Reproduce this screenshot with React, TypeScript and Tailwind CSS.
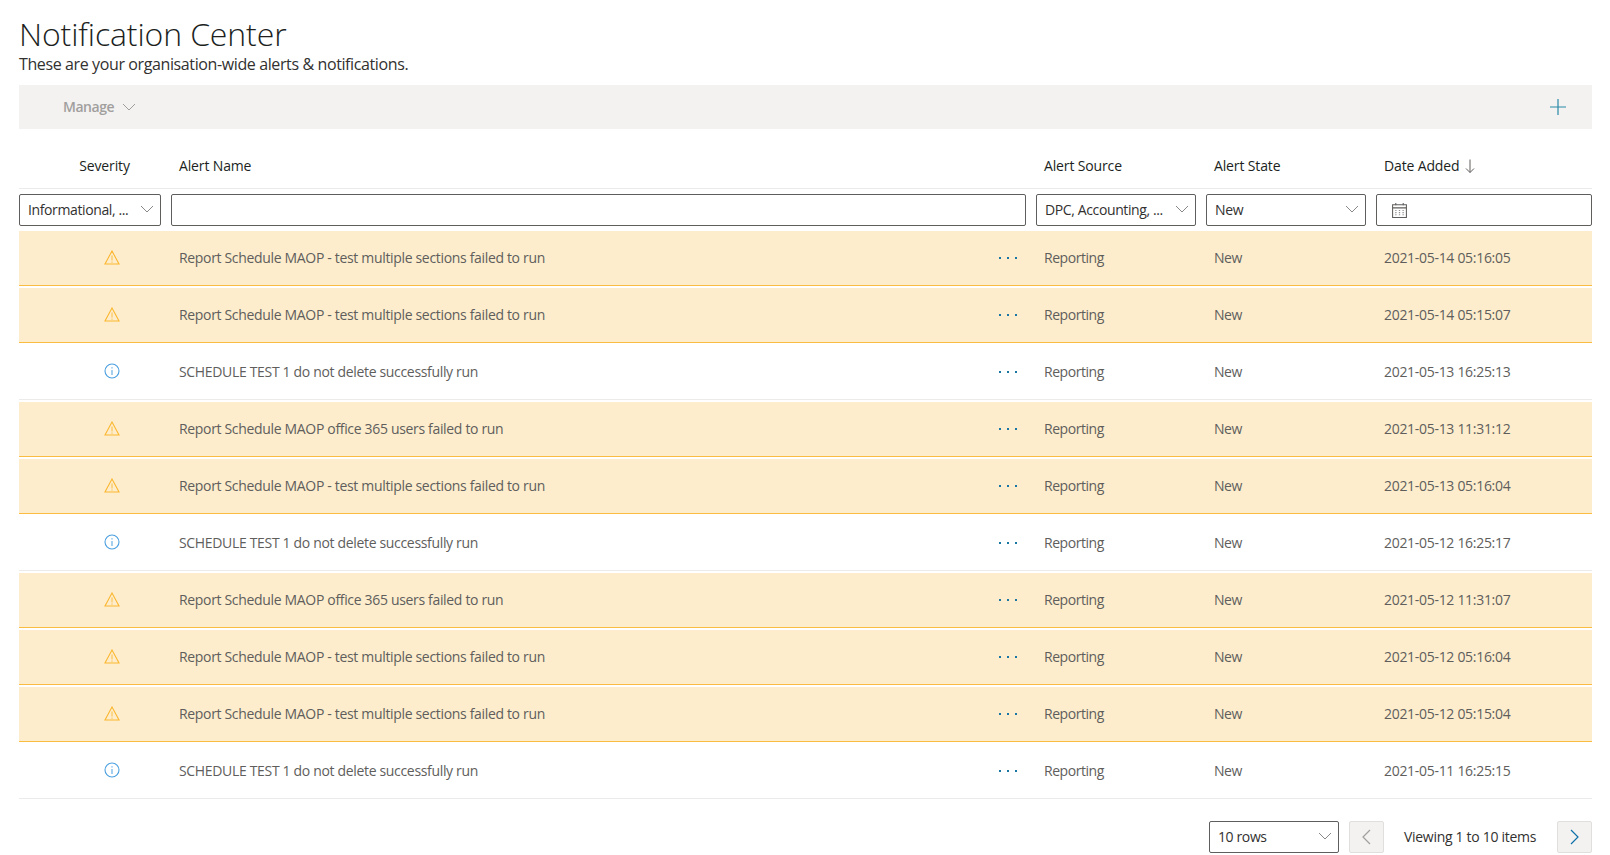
const font = "font-['Open_Sans','Noto_Sans',sans-serif]";
const columns = "grid grid-cols-[152px_865px_170px_170px_1fr]";

type Alert = {
  severity: "warning" | "info";
  name: string;
  date: string;
};

const alerts: Alert[] = [
  { severity: "warning", name: "Report Schedule MAOP - test multiple sections failed to run", date: "2021-05-14 05:16:05" },
  { severity: "warning", name: "Report Schedule MAOP - test multiple sections failed to run", date: "2021-05-14 05:15:07" },
  { severity: "info", name: "SCHEDULE TEST 1 do not delete successfully run", date: "2021-05-13 16:25:13" },
  { severity: "warning", name: "Report Schedule MAOP office 365 users failed to run", date: "2021-05-13 11:31:12" },
  { severity: "warning", name: "Report Schedule MAOP - test multiple sections failed to run", date: "2021-05-13 05:16:04" },
  { severity: "info", name: "SCHEDULE TEST 1 do not delete successfully run", date: "2021-05-12 16:25:17" },
  { severity: "warning", name: "Report Schedule MAOP office 365 users failed to run", date: "2021-05-12 11:31:07" },
  { severity: "warning", name: "Report Schedule MAOP - test multiple sections failed to run", date: "2021-05-12 05:16:04" },
  { severity: "warning", name: "Report Schedule MAOP - test multiple sections failed to run", date: "2021-05-12 05:15:04" },
  { severity: "info", name: "SCHEDULE TEST 1 do not delete successfully run", date: "2021-05-11 16:25:15" },
];

function Chevron({ className }: { className: string }) {
  return (
    <svg viewBox="0 0 14 8" fill="none" className={className}>
      <path d="M1 1l6 6 6-6" stroke="currentColor" strokeWidth="1" />
    </svg>
  );
}

function WarningIcon() {
  return (
    <svg viewBox="0 0 16 15" fill="none" className="w-4 h-[15px] text-[#fbb72f]">
      <path d="M8 1L1 14h14L8 1z" stroke="currentColor" strokeWidth="1.1" />
      <path d="M8 5.5v5M8 11.5v1.2" stroke="currentColor" strokeWidth="0.9" />
    </svg>
  );
}

function InfoIcon() {
  return (
    <svg viewBox="0 0 16 16" fill="none" className="w-4 h-4 text-[#4b9fdf]">
      <circle cx="8" cy="8" r="7" stroke="currentColor" strokeWidth="1.1" />
      <path d="M8 7v5M8 4.2v1.3" stroke="currentColor" strokeWidth="1" />
    </svg>
  );
}

function CalendarIcon() {
  return (
    <svg viewBox="0 0 16 16" fill="none" className="w-[17px] h-[17px] text-[#605e5c]">
      <path d="M1.5 2.5h13v12h-13z" stroke="currentColor" strokeWidth="1" />
      <path d="M1.5 5.5h13M4.5 1v2M11.5 1v2" stroke="currentColor" strokeWidth="1" />
      <path d="M4 8h1.2M7.4 8h1.2M10.8 8h1.2M4 10h1.2M7.4 10h1.2M10.8 10h1.2M4 12h1.2M7.4 12h1.2M10.8 12h1.2" stroke="currentColor" strokeWidth="1" opacity="0.7" />
    </svg>
  );
}

function Dropdown({ label, className }: { label: string; className: string }) {
  return (
    <div className={`h-8 border border-[#605e5c] rounded-[2px] bg-white flex items-center justify-between pl-2 pr-[6px] pb-[2px] text-[14px] tracking-[-0.38px] text-[#323130] ${className}`}>
      <span className="whitespace-nowrap">{label}</span>
      <Chevron className="w-[14px] h-2 text-[#8a8886]" />
    </div>
  );
}

export default function App() {
  return (
    <div className={`w-[1610px] h-[855px] overflow-hidden bg-white pl-[19px] pr-[18px] ${font}`}>
      <h1 className="pt-[13px] h-[53px] text-[32px] leading-[42px] font-light tracking-[-0.12px] text-[#201f1e]">
        Notification Center
      </h1>
      <p className="h-[19px] text-[16px] leading-[22px] tracking-[-0.385px] text-[#323130]">
        These are your organisation-wide alerts &amp; notifications.
      </p>

      <div className="mt-[13px] h-11 bg-[#f3f2f1] flex items-center justify-between pl-11 pr-[26px]">
        <div className="flex items-center gap-2 text-[14px] leading-[18px] pb-px font-semibold tracking-[-0.45px] text-[#a19f9d]">
          Manage
          <Chevron className="w-[14px] h-2 text-[#a19f9d]" />
        </div>
        <svg viewBox="0 0 16 16" fill="none" className="w-4 h-4 text-[#2b88a8]">
          <path d="M8 0v16M0 8h16" stroke="currentColor" strokeWidth="1.2" />
        </svg>
      </div>

      <div className={`${columns} mt-[26px] h-[34px] border-b border-[#edebe9] text-[14px] font-medium tracking-[-0.14px] text-[#201f1e]`}>
        <div className="flex justify-center pl-[19px]">Severity</div>
        <div className="pl-2">Alert Name</div>
        <div className="pl-2">Alert Source</div>
        <div className="pl-2">Alert State</div>
        <div className="pl-2 flex items-start gap-[6px]">
          Date Added
          <svg viewBox="0 0 10 14" fill="none" className="w-[10px] h-[15px] mt-1 text-[#605e5c]">
            <path d="M5 0v13M1 9l4 4 4-4" stroke="currentColor" strokeWidth="1" />
          </svg>
        </div>
      </div>

      <div className={`${columns} mt-[5px]`}>
        <Dropdown label="Informational, ..." className="mr-[10px]" />
        <div className="h-8 border border-[#605e5c] rounded-[2px] mr-[10px]" />
        <Dropdown label="DPC, Accounting, ..." className="mr-[10px]" />
        <Dropdown label="New" className="mr-[10px]" />
        <div className="h-8 border border-[#605e5c] rounded-[2px] flex items-center pl-[14px]">
          <CalendarIcon />
        </div>
      </div>

      <div className="mt-[5px]">
        {alerts.map((alert) => (
          <div
            key={alert.date}
            className={`${columns} h-[55px] mb-[2px] pb-[2px] items-center border-b text-[14px] tracking-[-0.45px] text-[#605e5c] ${
              alert.severity === "warning"
                ? "bg-[#fdedcd] border-[#fbbd41]"
                : "bg-white border-[#edebe9]"
            }`}
          >
            <div className="flex justify-center pl-[34px]">
              {alert.severity === "warning" ? <WarningIcon /> : <InfoIcon />}
            </div>
            <div className="pl-2 flex items-center justify-between pr-[19px]">
              <span className="tracking-[-0.33px]">{alert.name}</span>
              <svg viewBox="0 0 18 3" className="w-[18px] h-[3px] mt-[3px] text-[#1a76a3]">
                <rect x="0" width="2" height="2" fill="currentColor" />
                <rect x="8" width="2" height="2" fill="currentColor" />
                <rect x="16" width="2" height="2" fill="currentColor" />
              </svg>
            </div>
            <div className="pl-2">Reporting</div>
            <div className="pl-2">New</div>
            <div className="pl-2 tracking-[-0.3px]">{alert.date}</div>
          </div>
        ))}
      </div>

      <div className="mt-[22px] flex items-center justify-end gap-[10px]">
        <Dropdown label="10 rows" className="w-[130px]" />
        <button className="w-[35px] h-8 border border-[#e1dfdd] rounded-[2px] bg-[#f3f2f1] flex items-center justify-center text-[#a19f9d]">
          <svg viewBox="0 0 9 16" fill="none" className="w-[9px] h-4">
            <path d="M8 1L1 8l7 7" stroke="currentColor" strokeWidth="1.2" />
          </svg>
        </button>
        <span className="w-[153px] pl-[10px] pb-[2px] text-[14px] tracking-[-0.3px] text-[#323130]">Viewing 1 to 10 items</span>
        <button className="w-[35px] h-8 border border-[#e1dfdd] rounded-[2px] bg-[#f3f2f1] flex items-center justify-center text-[#0f6fa8]">
          <svg viewBox="0 0 9 16" fill="none" className="w-[9px] h-4">
            <path d="M1 1l7 7-7 7" stroke="currentColor" strokeWidth="1.2" />
          </svg>
        </button>
      </div>
    </div>
  );
}
